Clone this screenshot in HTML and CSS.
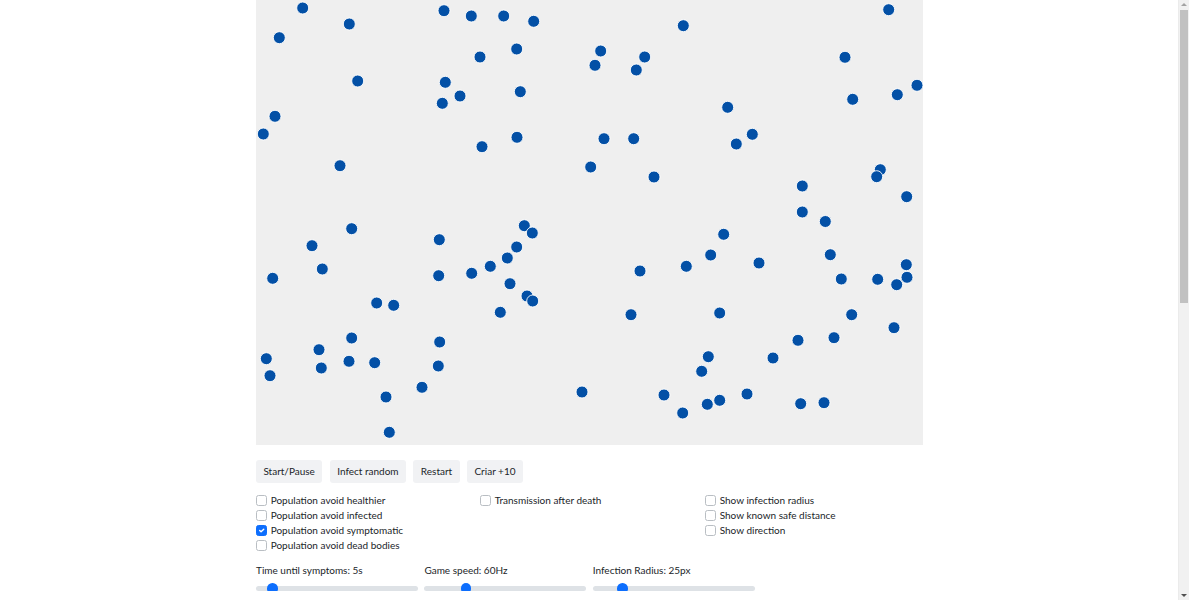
FILE: index.html
```html
<!DOCTYPE html>
<html lang="en">
<head>
<meta charset="utf-8">
<title>Epidemic simulation</title>
<link rel="stylesheet" href="styles.css">
</head>
<body>
<main class="app">
  <div class="board">
    <svg class="field" width="667" height="445" viewBox="0 0 667 445">
      <g class="people">
        <circle cx="46.7" cy="8" r="6"/><circle cx="93.3" cy="24" r="6"/><circle cx="23.3" cy="37.7" r="6"/>
        <circle cx="188" cy="10.7" r="6"/><circle cx="215.3" cy="16" r="6"/><circle cx="224" cy="57" r="6"/>
        <circle cx="101.7" cy="81" r="6"/><circle cx="189.3" cy="82.3" r="6"/><circle cx="204" cy="96" r="6"/>
        <circle cx="186.3" cy="103.3" r="6"/><circle cx="19" cy="116.3" r="6"/><circle cx="7.3" cy="134" r="6"/>
        <circle cx="226" cy="146.7" r="6"/><circle cx="84" cy="165.7" r="6"/><circle cx="247.7" cy="16" r="6"/>
        <circle cx="277.7" cy="21.3" r="6"/><circle cx="427.3" cy="25.7" r="6"/><circle cx="260.7" cy="49" r="6"/>
        <circle cx="344.7" cy="51" r="6"/><circle cx="388.7" cy="57" r="6"/><circle cx="339" cy="65.3" r="6"/>
        <circle cx="380.3" cy="70" r="6"/><circle cx="264.3" cy="91.7" r="6"/><circle cx="261" cy="137.3" r="6"/>
        <circle cx="348" cy="138.7" r="6"/><circle cx="377.7" cy="138.7" r="6"/><circle cx="334.7" cy="167" r="6"/>
        <circle cx="398" cy="177" r="6"/><circle cx="632.7" cy="9.7" r="6"/><circle cx="589" cy="57.3" r="6"/>
        <circle cx="661" cy="85.3" r="6"/><circle cx="641.3" cy="94.7" r="6"/><circle cx="596.7" cy="99.3" r="6"/>
        <circle cx="471.7" cy="107.3" r="6"/><circle cx="496.3" cy="134.3" r="6"/><circle cx="480.3" cy="144" r="6"/>
        <circle cx="624.3" cy="169.7" r="6"/><circle cx="620.7" cy="176.7" r="6"/><circle cx="546.3" cy="186" r="6"/>
        <circle cx="650.7" cy="196.7" r="6"/><circle cx="546.3" cy="212" r="6"/><circle cx="569.3" cy="221.5" r="6"/>
        <circle cx="95.7" cy="228.7" r="6"/><circle cx="183.3" cy="239.7" r="6"/><circle cx="56" cy="245.7" r="6"/>
        <circle cx="66.3" cy="269" r="6"/><circle cx="16.7" cy="278.3" r="6"/><circle cx="182.7" cy="275.7" r="6"/>
        <circle cx="215.7" cy="273.3" r="6"/><circle cx="120.7" cy="303" r="6"/><circle cx="137.7" cy="305.3" r="6"/>
        <circle cx="95.7" cy="338" r="6"/><circle cx="183.7" cy="342" r="6"/><circle cx="63" cy="349.7" r="6"/>
        <circle cx="10.3" cy="358.7" r="6"/><circle cx="93" cy="361.3" r="6"/><circle cx="118.7" cy="362.7" r="6"/>
        <circle cx="65.3" cy="368" r="6"/><circle cx="182.3" cy="366" r="6"/><circle cx="14" cy="375.7" r="6"/>
        <circle cx="166" cy="387.3" r="6"/><circle cx="130" cy="397" r="6"/><circle cx="133.3" cy="432.3" r="6"/>
        <circle cx="268.3" cy="225.7" r="6"/><circle cx="276.3" cy="233" r="6"/><circle cx="260.7" cy="247" r="6"/>
        <circle cx="251.3" cy="258" r="6"/><circle cx="234.3" cy="266.3" r="6"/><circle cx="254" cy="283.7" r="6"/>
        <circle cx="384" cy="271" r="6"/><circle cx="430.3" cy="266.3" r="6"/><circle cx="271" cy="296" r="6"/>
        <circle cx="276.7" cy="301" r="6"/><circle cx="244.3" cy="312.3" r="6"/><circle cx="375" cy="314.7" r="6"/>
        <circle cx="326" cy="392" r="6"/><circle cx="408" cy="395" r="6"/><circle cx="426.7" cy="413" r="6"/>
        <circle cx="467.7" cy="234.3" r="6"/><circle cx="454.7" cy="255" r="6"/><circle cx="503" cy="263" r="6"/>
        <circle cx="574.3" cy="254.7" r="6"/><circle cx="650.3" cy="264.7" r="6"/><circle cx="651" cy="277.3" r="6"/>
        <circle cx="585.3" cy="279" r="6"/><circle cx="621.7" cy="279.3" r="6"/><circle cx="640.7" cy="284.7" r="6"/>
        <circle cx="463.7" cy="313" r="6"/><circle cx="595.7" cy="314.7" r="6"/><circle cx="638" cy="327.7" r="6"/>
        <circle cx="542" cy="340.3" r="6"/><circle cx="578" cy="337.7" r="6"/><circle cx="452.3" cy="356.7" r="6"/>
        <circle cx="517" cy="358" r="6"/><circle cx="445.7" cy="371.3" r="6"/><circle cx="491" cy="394" r="6"/>
        <circle cx="463.7" cy="400.3" r="6"/><circle cx="451.3" cy="404.3" r="6"/><circle cx="544.7" cy="403.7" r="6"/>
        <circle cx="568" cy="402.7" r="6"/>
      </g>
    </svg>
  </div>

  <div class="buttons">
    <button class="btn" type="button">Start/Pause</button>
    <button class="btn" type="button">Infect random</button>
    <button class="btn" type="button">Restart</button>
    <button class="btn" type="button">Criar +10</button>
  </div>

  <div class="options">
    <div class="col">
      <label class="check"><input type="checkbox"><span>Population avoid healthier</span></label>
      <label class="check"><input type="checkbox"><span>Population avoid infected</span></label>
      <label class="check"><input type="checkbox" checked><span>Population avoid symptomatic</span></label>
      <label class="check"><input type="checkbox"><span>Population avoid dead bodies</span></label>
    </div>
    <div class="col">
      <label class="check"><input type="checkbox"><span>Transmission after death</span></label>
    </div>
    <div class="col">
      <label class="check"><input type="checkbox"><span>Show infection radius</span></label>
      <label class="check"><input type="checkbox"><span>Show known safe distance</span></label>
      <label class="check"><input type="checkbox"><span>Show direction</span></label>
    </div>
  </div>

  <div class="sliders">
    <label class="slider"><span>Time until symptoms: 5s</span><input type="range" min="0" max="1000" value="75"></label>
    <label class="slider"><span>Game speed: 60Hz</span><input type="range" min="0" max="1000" value="239"></label>
    <label class="slider"><span>Infection Radius: 25px</span><input type="range" min="0" max="1000" value="161"></label>
  </div>
</main>

<div class="scrollbar" aria-hidden="true">
  <div class="sb-arrow sb-up"></div>
  <div class="sb-track"><div class="sb-thumb"></div></div>
  <div class="sb-arrow sb-down"></div>
</div>
</body>
</html>
```

FILE: styles.css
```css
html, body {
  margin: 0;
  padding: 0;
  background: #ffffff;
}

body {
  font-family: Lato, "Noto Sans", "Liberation Sans", sans-serif;
  font-size: 10px;
  color: #212529;
  padding-right: 10px;
}

.app {
  width: 667px;
  margin: 0 auto;
}

.board {
  width: 667px;
  height: 445px;
  background: #efefef;
}

.field {
  display: block;
}

.people circle {
  fill: #0350a6;
  stroke: #ffffff;
  stroke-width: 0.9;
}

.buttons {
  display: flex;
  gap: 7.5px;
  margin-top: 14.5px;
}

.btn {
  height: 23.5px;
  padding: 0 7.4px;
  border: none;
  border-radius: 3px;
  background: #f1f2f4;
  color: #212529;
  font: inherit;
  cursor: pointer;
}

.options {
  display: grid;
  grid-template-columns: 224px 225px 1fr;
  margin-top: 10px;
  line-height: 15px;
}

.check {
  display: flex;
  align-items: center;
  height: 15px;
}

.check input {
  -webkit-appearance: none;
  appearance: none;
  width: 10.7px;
  height: 10.7px;
  margin: 0 4px 0 0;
  border: 0.7px solid #b9bec3;
  border-radius: 2.5px;
  background: #ffffff;
  flex: none;
}

.check input:checked {
  background-color: #0d6efd;
  border-color: #0d6efd;
  background-image: url("data:image/svg+xml,%3csvg xmlns='http://www.w3.org/2000/svg' viewBox='0 0 20 20'%3e%3cpath fill='none' stroke='%23fff' stroke-linecap='round' stroke-linejoin='round' stroke-width='3' d='M6 10l3 3l6-6'/%3e%3c/svg%3e");
  background-size: 100% 100%;
}

.sliders {
  display: grid;
  grid-template-columns: repeat(3, 162px);
  column-gap: 6.4px;
  margin-top: 10px;
}

.slider {
  display: flex;
  flex-direction: column;
  line-height: 15px;
}

.slider input {
  -webkit-appearance: none;
  appearance: none;
  width: 162px;
  height: 5.3px;
  margin: 8px 0 0;
  border-radius: 3px;
  background: #dee2e6;
  outline: none;
}

.slider input::-webkit-slider-thumb {
  -webkit-appearance: none;
  appearance: none;
  width: 10.7px;
  height: 10.7px;
  border-radius: 50%;
  background: #0d6efd;
  border: none;
}

/* browser scrollbar drawn over the right edge */
.scrollbar {
  position: fixed;
  top: 0;
  right: 0;
  width: 10px;
  height: 100vh;
  display: flex;
  flex-direction: column;
  background: #f1f1f1;
  border-left: 1px solid #ebebeb;
}

.sb-arrow {
  height: 9px;
  flex: none;
  display: flex;
  align-items: center;
  justify-content: center;
}

.sb-arrow::before {
  content: "";
  width: 0;
  height: 0;
  border-left: 3px solid transparent;
  border-right: 3px solid transparent;
}

.sb-up::before {
  border-bottom: 3px solid #a3a3a3;
}

.sb-down::before {
  border-top: 3px solid #505050;
}

.sb-track {
  flex: 1;
  padding: 0.5px 1px;
}

.sb-thumb {
  height: 293px;
  background: #c1c1c1;
}
```
